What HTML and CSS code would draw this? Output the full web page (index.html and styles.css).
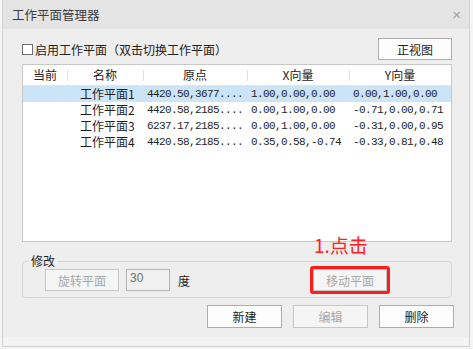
FILE: index.html
```html
<!DOCTYPE html>
<html lang="zh-CN">
<head>
  <meta charset="UTF-8" />
  <title>工作平面管理器</title>
  <link rel="stylesheet" href="styles.css">
</head>
<body>
  <div class="window">
    <div class="titlebar">
      <span class="title">工作平面管理器</span>
      <span class="close">×</span>
    </div>

    <div class="content">
      <div class="toprow">
        <label class="check"><span class="box"></span>启用工作平面（双击切换工作平面）</label>
        <button class="btn">正视图</button>
      </div>

      <div class="list">
        <div class="row head">
          <div class="cell">当前</div>
          <div class="cell">名称</div>
          <div class="cell">原点</div>
          <div class="cell">X向量</div>
          <div class="cell">Y向量</div>
        </div>
        <div class="row selected">
          <div class="cell"></div>
          <div class="cell name">工作平面1</div>
          <div class="cell num">4420.50,3677....</div>
          <div class="cell num">1.00,0.00,0.00</div>
          <div class="cell num">0.00,1.00,0.00</div>
        </div>
        <div class="row">
          <div class="cell"></div>
          <div class="cell name">工作平面2</div>
          <div class="cell num">4420.58,2185....</div>
          <div class="cell num">0.00,1.00,0.00</div>
          <div class="cell num">-0.71,0.00,0.71</div>
        </div>
        <div class="row">
          <div class="cell"></div>
          <div class="cell name">工作平面3</div>
          <div class="cell num">6237.17,2185....</div>
          <div class="cell num">0.00,1.00,0.00</div>
          <div class="cell num">-0.31,0.00,0.95</div>
        </div>
        <div class="row">
          <div class="cell"></div>
          <div class="cell name">工作平面4</div>
          <div class="cell num">4420.58,2185....</div>
          <div class="cell num">0.35,0.58,-0.74</div>
          <div class="cell num">-0.33,0.81,0.48</div>
        </div>
      </div>

      <fieldset class="group">
        <legend>修改</legend>
        <div class="group-row">
          <button class="btn" disabled>旋转平面</button>
          <input class="angle" type="text" value="30" disabled />
          <span class="unit">度</span>
          <span class="mark">
            <button class="btn" disabled>移动平面</button>
            <span class="note">1.点击</span>
          </span>
        </div>
      </fieldset>

      <div class="actions">
        <button class="btn wide">新建</button>
        <button class="btn wide" disabled>编辑</button>
        <button class="btn wide">删除</button>
      </div>
    </div>
  </div>
</body>
</html>
```

FILE: styles.css
```css
* {
  box-sizing: border-box;
}

body {
  margin: 0;
  background: #f5f5f5;
  font-family: "Noto Sans CJK SC", "Liberation Sans", sans-serif;
  font-size: 12px;
  color: #1e1e1e;
}

.window {
  margin-left: 2px;
  width: 468px;
  height: 347px;
  border-left: 1px solid #d0d0d0;
  border-right: 1px solid #d0d0d0;
  border-bottom: 1px solid #d0d0d0;
  background: #f3f3f3;
}

.titlebar {
  height: 29px;
  background: #e4e4e4;
  display: flex;
  align-items: center;
  justify-content: space-between;
  padding: 0 8px 0 9px;
}

.title {
  font-size: 12.5px;
  color: #3a3a3a;
}

.close {
  font-family: "Liberation Sans", sans-serif;
  font-size: 15px;
  color: #a0a0a0;
}

.content {
  height: 308px;
  margin-right: 1px;
  padding: 9px 16px 0 19px;
  background: #eeeeee;
}

.toprow {
  display: flex;
  justify-content: space-between;
  align-items: center;
  height: 22px;
}

.check {
  display: flex;
  align-items: center;
  gap: 2px;
  color: #222;
}

.box {
  width: 11px;
  height: 11px;
  border: 1px solid #707070;
  background: #fff;
}

.btn {
  width: 74px;
  height: 22px;
  padding: 0;
  border: 1px solid #adadad;
  background: #fdfdfd;
  font-family: "Noto Sans CJK SC", sans-serif;
  font-size: 12px;
  color: #1e1e1e;
}

.btn:disabled {
  border-color: #c6c6c6;
  background: #f5f5f5;
  color: #a8a8a8;
}

.list {
  margin-top: 4px;
  height: 178px;
  border: 1px solid #c8c8c8;
  background: #fff;
}

.row {
  display: grid;
  grid-template-columns: 44px 76px 104px 102px 1fr;
  height: 16px;
  line-height: 16px;
  align-items: center;
}

.row.head {
  height: 21px;
  line-height: 20px;
  border-bottom: 1px solid #e5e5e5;
}

.head .cell {
  text-align: center;
}

.head .cell + .cell {
  background: linear-gradient(#e2e2e2, #e2e2e2) no-repeat left center / 1px 11px;
}

.selected {
  background: #cce4f7;
}

.name {
  padding-left: 13px;
  white-space: nowrap;
}

.num {
  padding-left: 4px;
  font-family: "Liberation Mono", monospace;
  font-size: 11px;
  letter-spacing: -0.6px;
  white-space: nowrap;
}

.group {
  margin: 12px 0 0;
  padding: 1px 0 6px 22px;
  border: 1px solid #d6d6d6;
  border-radius: 4px;
}

.group legend {
  margin-left: -16px;
  padding: 0 2px;
  line-height: 14px;
  font-size: 12px;
  color: #1e1e1e;
}

.group-row {
  display: flex;
  align-items: center;
  height: 22px;
}

.angle {
  width: 44px;
  height: 22px;
  margin-left: 7px;
  padding: 0 0 4px 3px;
  border: 1px solid #b4b4b4;
  background: #f0f0f0;
  font-family: "Liberation Sans", sans-serif;
  font-size: 12px;
  color: #707070;
}

.unit {
  margin-left: 8px;
}

.mark {
  position: relative;
  margin-left: 123px;
  display: flex;
}

.mark::after {
  content: "";
  position: absolute;
  inset: -3px;
  border: 3px solid #ff1c1c;
  border-radius: 3px;
}

.note {
  position: absolute;
  left: 1px;
  top: -34px;
  font-size: 19px;
  line-height: 19px;
  color: #ff2020;
  white-space: nowrap;
}

.actions {
  display: flex;
  justify-content: flex-end;
  gap: 11px;
  margin-top: 7px;
  margin-right: -2px;
}

.btn.wide {
  width: 75px;
  height: 23px;
}
```
